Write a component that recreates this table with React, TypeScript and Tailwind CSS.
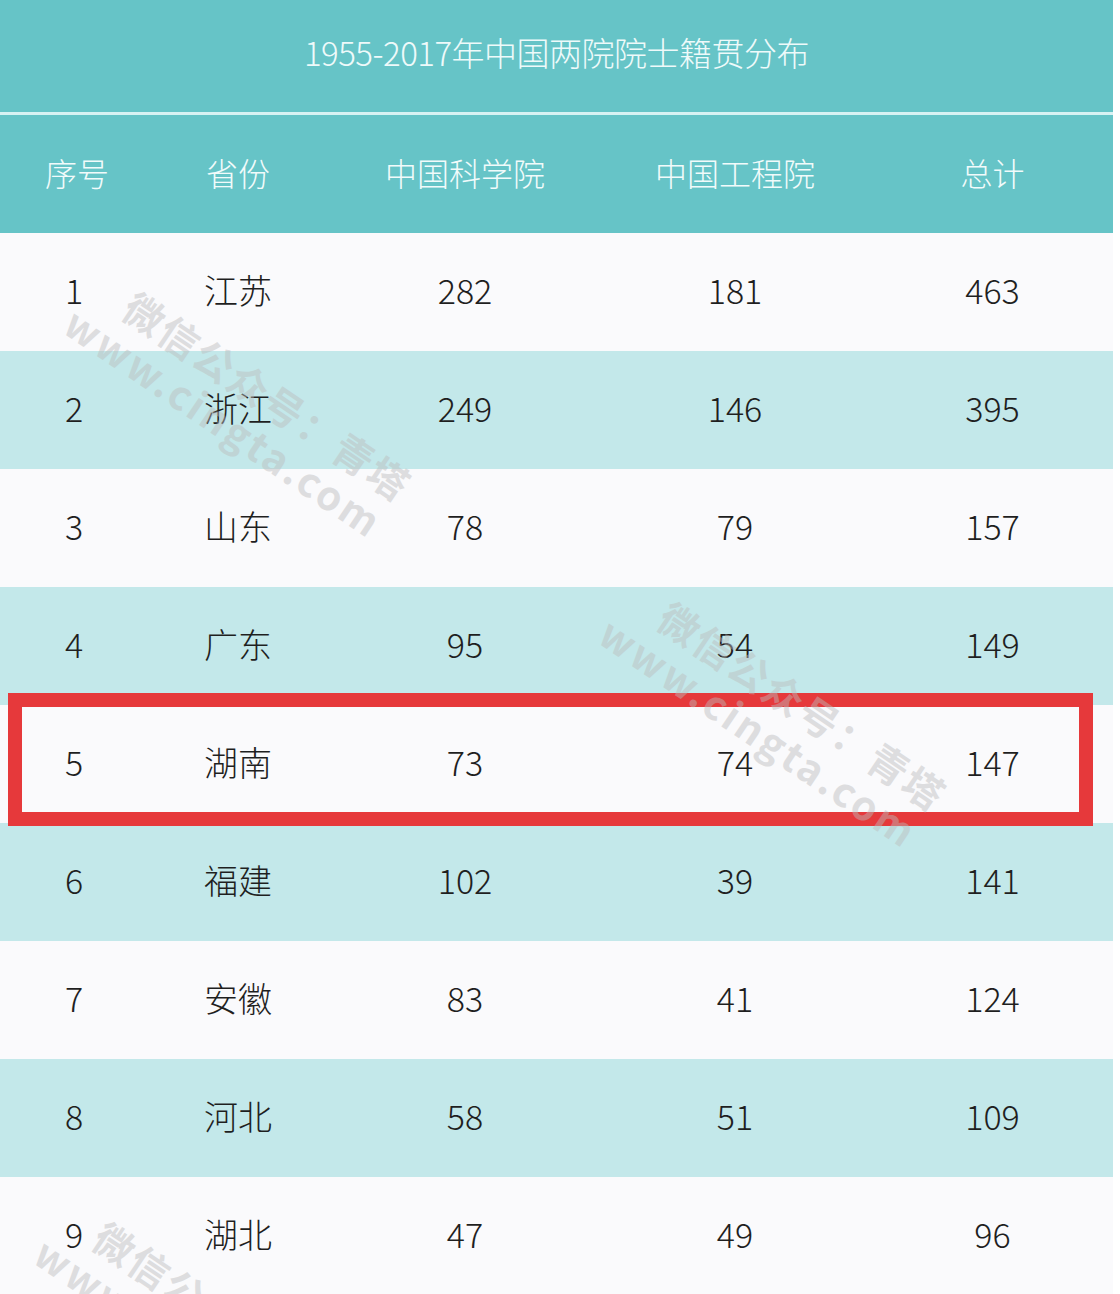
import React from 'react';

// 1955-2017 academician origin table (screenshot recreation)

type Row = { no: number; province: string; cas: number; cae: number; total: number };

const ROWS: Row[] = [
  { no: 1, province: '江苏', cas: 282, cae: 181, total: 463 },
  { no: 2, province: '浙江', cas: 249, cae: 146, total: 395 },
  { no: 3, province: '山东', cas: 78, cae: 79, total: 157 },
  { no: 4, province: '广东', cas: 95, cae: 54, total: 149 },
  { no: 5, province: '湖南', cas: 73, cae: 74, total: 147 },
  { no: 6, province: '福建', cas: 102, cae: 39, total: 141 },
  { no: 7, province: '安徽', cas: 83, cae: 41, total: 124 },
  { no: 8, province: '河北', cas: 58, cae: 51, total: 109 },
  { no: 9, province: '湖北', cas: 47, cae: 49, total: 96 },
];

const GRID = 'grid grid-cols-[150px_176px_278px_262px_247px] items-center';

function Watermark({ x, y }: { x: number; y: number }) {
  return (
    <div
      className="absolute pointer-events-none origin-top-left rotate-[34deg] text-[#bcbcbc] opacity-45 leading-none"
      style={{ left: x, top: y }}
    >
      <div className="text-[40px] font-bold tracking-[2px] whitespace-nowrap">微信公众号：青塔</div>
      <div className="text-[40px] font-bold tracking-[3px] whitespace-nowrap mt-[6px] -ml-[40px]">www.cingta.com</div>
    </div>
  );
}

export default function App() {
  return (
    <div
      className="relative w-[1120px] h-[1294px] overflow-hidden bg-white"
      style={{ fontFamily: '"Noto Sans CJK SC", "Noto Sans", sans-serif' }}
    >
      <div className="w-[1113px]">
        {/* Title */}
        <div className="h-[112px] bg-[#66c4c7] flex items-center justify-center">
          <span className="text-[33px] font-light text-[#eefafa] tracking-[-0.5px] -mt-[6px]">
            1955-2017年中国两院院士籍贯分布
          </span>
        </div>
        <div className="h-[3px] bg-[#d8f2f3]" />

        {/* Header */}
        <div className={`${GRID} h-[118px] pb-[4px] bg-[#66c4c7] text-[32px] font-light text-[#f1fbfb]`}>
          <div className="text-center pl-[4px]">序号</div>
          <div className="text-center">省份</div>
          <div className="text-center">中国科学院</div>
          <div className="text-center">中国工程院</div>
          <div className="text-center pl-[6px]">总计</div>
        </div>

        {/* Body */}
        {ROWS.map((r, i) => (
          <div
            key={r.no}
            className={`${GRID} h-[118px] pb-[6px] text-[34px] font-light text-[#1f1f1f] ${
              i % 2 === 0 ? 'bg-[#fafafc]' : 'bg-[#c3e8ea]'
            }`}
          >
            <div className="text-center -ml-[2px]">{r.no}</div>
            <div className="text-center">{r.province}</div>
            <div className="text-center">{r.cas}</div>
            <div className="text-center">{r.cae}</div>
            <div className="text-center pl-[6px]">{r.total}</div>
          </div>
        ))}
      </div>

      {/* Highlight box around row 5 */}
      <div className="absolute left-[8px] top-[693px] w-[1085px] h-[133px] border-[14px] border-[#e6393b] pointer-events-none" />

      {/* Watermarks */}
      <Watermark x={140} y={285} />
      <Watermark x={675} y={595} />
      <Watermark x={110} y={1215} />
    </div>
  );
}
